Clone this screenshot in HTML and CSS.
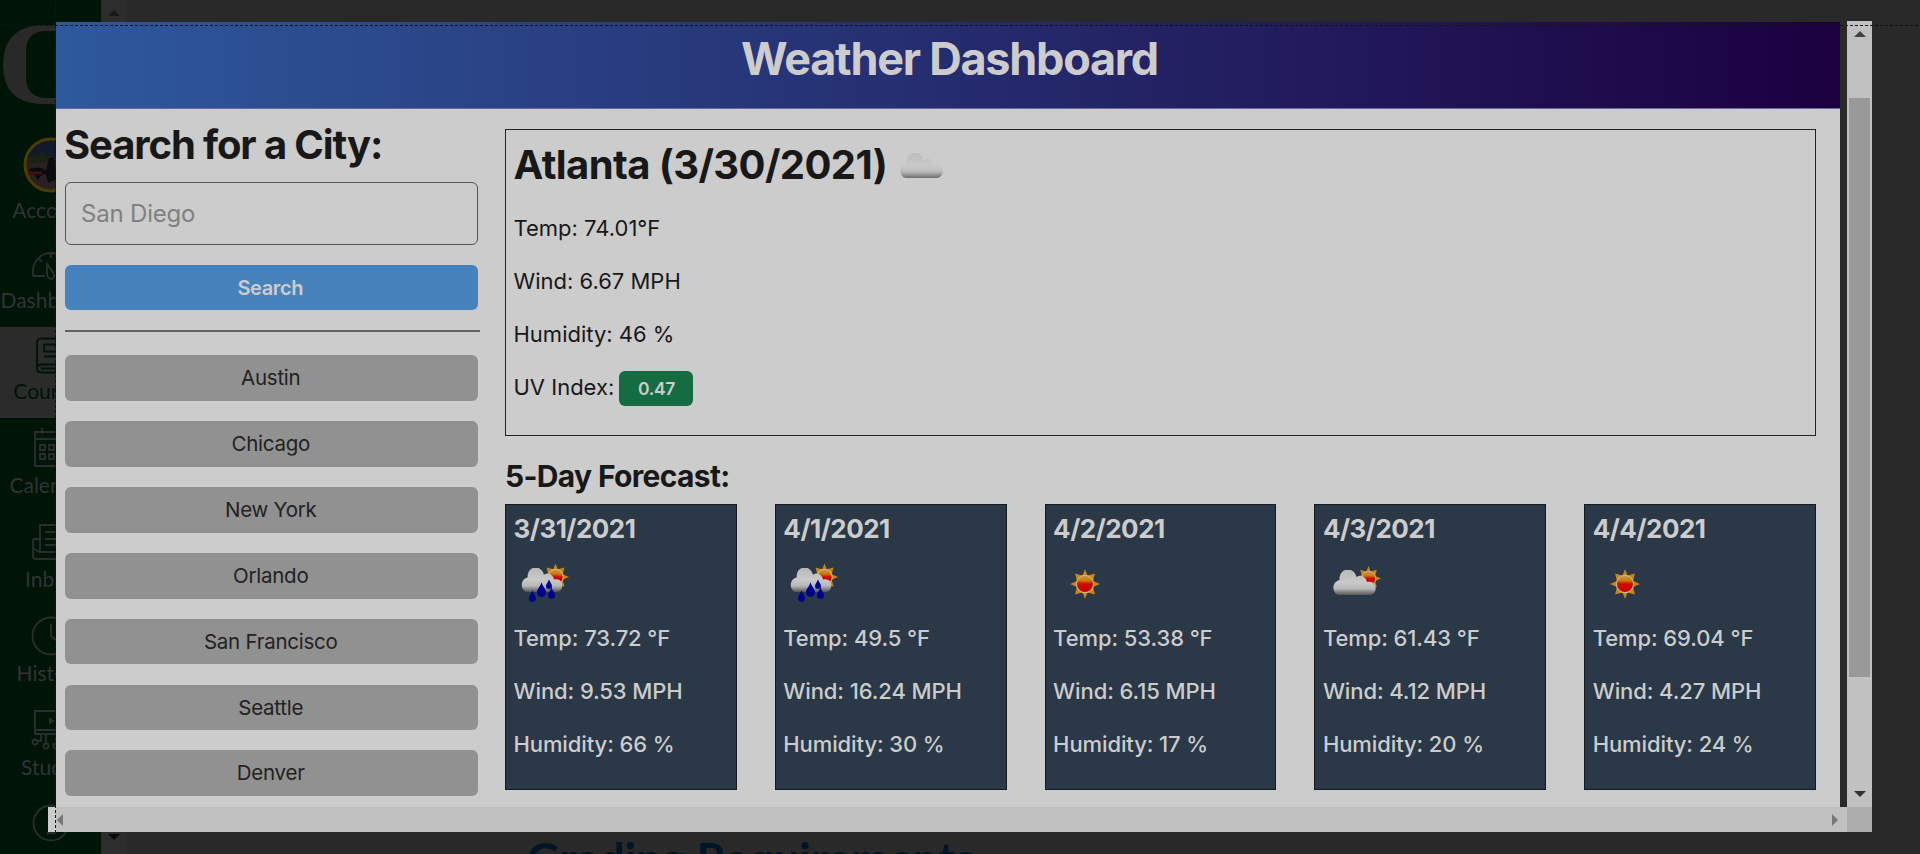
FILE: index.html
```html
<!DOCTYPE html>
<html lang="en">
<head>
<meta charset="utf-8">
<title>Weather Dashboard</title>
<link rel="stylesheet" href="styles.css">
</head>
<body>
<svg width="0" height="0" class="defs">
  <defs>
    <linearGradient id="cloudFill" x1="0" y1="0" x2="0" y2="1"><stop offset="0" stop-color="#b8b8b8"/><stop offset=".5" stop-color="#c9c9c9"/><stop offset=".75" stop-color="#b8b8b8"/><stop offset="1" stop-color="#555"/></linearGradient>
    <linearGradient id="sunFill" x1="0" y1="0" x2="0" y2="1"><stop offset="0" stop-color="#cc9a50"/><stop offset=".3" stop-color="#cc7a00"/><stop offset=".5" stop-color="#cc0c00"/><stop offset="1" stop-color="#cc0000"/></linearGradient>
    <symbol id="sun" viewBox="-15 -15 30 30"><path fill="#cc850c" d="M0-15 2.500-8.500 10-10.500 8-3 15 0 8 3 10 10.500 2.500 8.500 0 15-2.500 8.500-10 10.500-8 3-15 0-8-3-10-10.500-2.500-8.500Z"/><circle r="8.600" fill="url(#sunFill)" stroke="#ccb090" stroke-width="1.200"/></symbol>
    <symbol id="cloud" viewBox="0 0 43 25"><path fill="url(#cloudFill)" d="M6 25C-1 24-2 12 6.500 10 6-3 21-4 23.500 7 28 4 33 7 34 12 45 10 45 24 37 25Z"/></symbol>
    <symbol id="drop" viewBox="0 0 8 13"><path fill="#000090" d="M4 0C5 4 8 6 8 9A4 4 0 0 1 0 9C0 6 3 4 4 0Z"/></symbol>
  </defs>
</svg>
<div class="app">
  <nav class="rail">
    <svg class="logo" viewBox="0 0 101 104"><path fill-rule="evenodd" d="M40 25H61Q98 28 98 65T61 104H40Q3 102 3 65T40 25ZM45 31Q26 32 26 51V80Q28 97 45 98H56Q75 97 75 80V51Q75 32 56 31Z"/></svg>
    <div class="item account">
      <svg class="avatar" viewBox="0 0 54 54"><circle cx="27" cy="27" r="26" fill="#292020" stroke="#4b3e00" stroke-width="3"/><path d="M3 21A25 25 0 0 1 51 21Z" fill="#101a2b"/><path d="M4 20l6-4 5 2 4-6 3 7 5-2v8H3z" fill="#1b2113"/><path d="M5 31q11-4 17 2l3-13 5 0 3 21-9 4-2-9q-6 0-8 7-2-8-9-8z" fill="#090b11"/><path d="M4 35h14" stroke="#43100f" stroke-width="3"/></svg>
      <span>Account</span>
    </div>
    <div class="item dash">
      <svg viewBox="0 -4 40 40"><path d="M2 29V24A18 18 0 0 1 38 24V29H24M2 29H14M20 7v4M8 12l3 3M32 12l-3 3M16 17l7 10q1 4-3 5-4-1-4-5Z"/></svg>
      <span>Dashboard</span>
    </div>
    <div class="item active courses">
      <svg viewBox="0 -1.5 40 40"><path d="M6 32V7q0-4 4-4H34V29H11q-5 0-5 4 0 4 5 4H34M34 29v8M10 33H31M13 9H28V16H13ZM13 21H28"/></svg>
      <span>Courses</span>
    </div>
    <div class="item calendar">
      <svg viewBox="0 0 40 40"><path d="M4 4H36V38H4ZM4 11H36M11 0V6M29 0V6M9 17h5v5H9zM18 17h5v5h-5zM27 17h5v5h-5zM9 26h5v5H9zM18 26h5v5h-5zM27 26h5v5h-5z"/></svg>
      <span>Calendar</span>
    </div>
    <div class="item inbox">
      <svg viewBox="0 0 40 40"><path d="M9 30V3H32V30ZM14 10H27M14 17H27M14 23H27M9 17H4q-2 0-2 2V34q0 3 3 3H35q3 0 3-3V19q0-2-2-2H32M2 26l6 4"/></svg>
      <span>Inbox</span>
    </div>
    <div class="item history">
      <svg viewBox="0 0 40 40"><circle cx="20" cy="20" r="18.500"/><path d="M20 8V20L28 27"/></svg>
      <span>History</span>
    </div>
    <div class="item studio">
      <svg viewBox="0 0 40 40"><path d="M4 1H36V24H4ZM4 20H36M19 9l3 2-3 2ZM10 25v6H5M15 25v8M25 25v8M30 25v6h5"/><circle cx="4" cy="32" r="2.500"/><circle cx="15" cy="36" r="2.500"/><circle cx="25" cy="36" r="2.500"/><circle cx="36" cy="32" r="2.500"/></svg>
      <span>Studio</span>
    </div>
    <div class="item help">
      <svg viewBox="0 0 40 40"><circle cx="20" cy="20" r="17.500"/><path d="M17 10h4M17 18h4v12M16 30h9"/></svg>
    </div>
  </nav>
  <div class="page-scroll"><i class="tri up"></i><i class="tri down"></i></div>
  <main class="page"><h2>Grading Requirements</h2></main>
</div>

<section class="viewer">
  <div class="view-row">
    <div class="dashboard">
      <header><h1>Weather Dashboard</h1></header>
      <div class="body">
        <aside>
          <h2 class="search-title">Search for a City:</h2>
          <div class="field">San Diego</div>
          <div class="btn primary">Search</div>
          <hr>
          <div class="cities">
            <div class="btn">Austin</div><div class="btn">Chicago</div><div class="btn">New York</div><div class="btn">Orlando</div><div class="btn">San Francisco</div><div class="btn">Seattle</div><div class="btn">Denver</div>
          </div>
        </aside>
        <div class="weather">
          <div class="today">
            <h2><span class="place">Atlanta (3/30/2021)</span><svg class="cloud-now" viewBox="0 0 43 25"><use href="#cloud"/></svg></h2>
            <p>Temp: 74.01°F</p><p>Wind: 6.67 MPH</p><p>Humidity: 46 %</p><p>UV Index: <b class="uv">0.47</b></p>
          </div>
          <h3>5-Day Forecast:</h3>
          <div class="days">
            <div class="day"><h4>3/31/2021</h4>
              <svg class="wx" viewBox="0 0 62 60"><use href="#sun" x="28" y="8" width="27" height="28"/><use href="#cloud" x="7" y="13" width="42" height="24"/><use href="#drop" x="23" y="27" width="9" height="15"/><use href="#drop" x="32" y="24" width="6" height="10"/><use href="#drop" x="15" y="35" width="7" height="12"/><use href="#drop" x="34" y="32" width="7" height="12"/></svg>
              <p>Temp: 73.72 °F</p><p>Wind: 9.53 MPH</p><p>Humidity: 66 %</p></div>
            <div class="day"><h4>4/1/2021</h4>
              <svg class="wx" viewBox="0 0 62 60"><use href="#sun" x="28" y="8" width="27" height="28"/><use href="#cloud" x="7" y="13" width="42" height="24"/><use href="#drop" x="23" y="27" width="9" height="15"/><use href="#drop" x="32" y="24" width="6" height="10"/><use href="#drop" x="15" y="35" width="7" height="12"/><use href="#drop" x="34" y="32" width="7" height="12"/></svg>
              <p>Temp: 49.5 °F</p><p>Wind: 16.24 MPH</p><p>Humidity: 30 %</p></div>
            <div class="day"><h4>4/2/2021</h4>
              <svg class="wx" viewBox="0 0 62 60"><use href="#sun" x="17" y="14" width="30" height="30"/></svg>
              <p>Temp: 53.38 °F</p><p>Wind: 6.15 MPH</p><p>Humidity: 17 %</p></div>
            <div class="day"><h4>4/3/2021</h4>
              <svg class="wx" viewBox="0 0 62 60"><use href="#sun" x="33" y="11" width="25" height="25"/><use href="#cloud" x="10" y="15" width="43" height="25"/></svg>
              <p>Temp: 61.43 °F</p><p>Wind: 4.12 MPH</p><p>Humidity: 20 %</p></div>
            <div class="day"><h4>4/4/2021</h4>
              <svg class="wx" viewBox="0 0 62 60"><use href="#sun" x="17" y="14" width="30" height="30"/></svg>
              <p>Temp: 69.04 °F</p><p>Wind: 4.27 MPH</p><p>Humidity: 24 %</p></div>
          </div>
        </div>
      </div>
    </div>
    <div class="vbar"><i class="tri up"></i><div class="thumb"></div><i class="tri down"></i></div>
  </div>
  <div class="hbar"><div class="track"><i class="tri left"></i><i class="tri right"></i></div><div class="corner"></div></div>
</section>
<div class="guide-h"></div>
<div class="guide-v"></div>
</body>
</html>
```

FILE: styles.css
```css
* { box-sizing: border-box; }
body { margin: 0; width: 1920px; height: 854px; overflow: hidden; position: relative; background: #292929; font-family: Inter, "Liberation Sans", sans-serif; color: #181818; }
h1, h2, h3, h4, p { margin: 0; font-weight: 700; }
.defs { position: absolute; }
.app { display: flex; height: 854px; }

/* Course navigation rail */
.rail { width: 101px; background: #001407; color: #313335; font-family: Lato, sans-serif; font-size: 21px; line-height: 26px; overflow: hidden; flex: none; }
.logo { display: block; width: 101px; height: 104px; fill: #292929; }
.item { height: 94px; display: flex; flex-direction: column; align-items: center; justify-content: flex-end; padding-bottom: 14px; white-space: nowrap; }
.item svg { width: 40px; height: 40px; flex: none; fill: none; stroke: #2b2e2e; stroke-width: 1.8; margin-bottom: 4px; overflow: visible; }
.item .avatar { width: 54px; height: 54px; stroke: none; margin-bottom: 5px; }
.account { height: 133px; }
.dash { height: 90px; }
.item.active { height: 91px; background: #2b2b2b; color: #001407; }
.item.active svg { stroke: #001407; }
.help { height: 56px; padding: 0; justify-content: center; }
.item.help svg { margin: 2px 0 0; }

.page-scroll { width: 25px; background: #2d2d2d; display: flex; flex-direction: column; justify-content: space-between; align-items: center; padding: 10px 0 16px; }
.page { flex: 1; display: flex; align-items: flex-end; overflow: hidden; }
.page h2 { font: 700 45px/54px Lato, sans-serif; color: #001525; height: 22px; margin-left: 401px; letter-spacing: .1px; white-space: nowrap; }

.tri { width: 0; height: 0; border: 6px solid transparent; }
.up { border-top: 0; border-bottom-color: #414141; }
.down { border-bottom: 0; border-top-color: #303030; }
.left { border-left: 0; border-right-color: #777; }
.right { border-right: 0; border-left-color: #777; }
.page-scroll .up { border-bottom-color: #191919; }
.page-scroll .down { border-top-color: #090909; margin-bottom: -2px; }

/* Preview overlay */
.viewer { position: absolute; left: 48px; top: 21px; width: 1824px; height: 811px; }
.view-row { display: flex; justify-content: space-between; height: 786px; padding-left: 8px; }
.dashboard { width: 1784px; margin-top: 1px; height: 785px; background: #ccc; overflow: hidden; }
.vbar { width: 25px; height: 786px; background: #c1c1c1; display: flex; flex-direction: column; align-items: center; padding: 10px 0 10px; }
.vbar .thumb { width: 21px; height: 579px; margin-top: 61px; background: #999; }
.vbar .down { margin-top: auto; }
.hbar { display: flex; height: 25px; }
.track { width: 1799px; background: #c0c0c0; display: flex; justify-content: space-between; align-items: center; padding: 0 9px; border-left: 8px solid #ccc; }
.track .left { margin-left: -8px; }
.corner { width: 25px; background: #adadad; }

header { height: 87px; background: linear-gradient(90deg, #2e599d, #1c0040); border-bottom: 1px solid #6868a0; text-align: center; color: #ccc; }
h1 { font-size: 45px; line-height: 74px; letter-spacing: -1.25px; padding-left: 3px; }
.body { display: flex; padding: 0 24px 0 9px; }
aside { width: 415px; margin-right: 25px; flex: none; }
.search-title { font-size: 40px; line-height: 48px; margin-top: 12px; letter-spacing: -1.12px; margin-left: -1px; white-space: nowrap; }
.field { margin-top: 13px; width: 412.5px; height: 63px; border: 1px solid #555; border-radius: 6px; padding-left: 15px; font-size: 24px; letter-spacing: -.2px; line-height: 61px; color: #808080; }
.btn { width: 412.5px; height: 45.7px; border-radius: 6px; background: #919191; font-size: 20.5px; letter-spacing: -.25px; line-height: 46px; text-align: center; color: #222; padding-right: 1px; }
.primary { margin-top: 19.5px; background: #4682bb; color: #ccc; font-size: 20px; font-weight: 600; letter-spacing: -.4px; padding-right: 2px; }
hr { border: 0; height: 2px; background: #626262; margin: 20px 0 23px; }
.cities { display: flex; flex-direction: column; gap: 20.2px; }

.weather { flex: 1; }
.today { margin-top: 20px; height: 307px; border: 1px solid #222; padding: 7px 7.500px 0; }
.today h2 { font-size: 40px; line-height: 56px; letter-spacing: -.6px; display: flex; align-items: center; }
.cloud-now { width: 43px; height: 25px; margin-left: 13px; opacity: .8; }
.today p { font-size: 22px; font-weight: 400; height: 53.3px; line-height: 28px; white-space: nowrap; }
.today h2 + p { margin-top: 20.5px; }
.uv { display: inline-block; width: 74px; height: 35px; margin: -7px 0 -5px -1px; border-radius: 6px; background: #146c43; color: #ccc; font-size: 17.500px; font-weight: 600; letter-spacing: -.4px; line-height: 35px; text-align: center; vertical-align: middle; }
h3 { font-size: 30px; line-height: 36px; margin-top: 22px; letter-spacing: -.67px; }
.days { display: flex; gap: 38px; margin-top: 10px; }
.day { flex: 1; height: 286px; background: #2a3847; border: 1px solid #151a1f; color: #ccc; padding: 8px 7.500px; }
h4 { font-size: 26px; line-height: 32px; letter-spacing: -.5px; }
.wx { display: block; width: 62px; height: 60px; margin-top: 10px; }
.day p { font-size: 22px; line-height: 28px; font-weight: 500; height: 53.3px; letter-spacing: -.1px; white-space: nowrap; }
.wx + p { margin-top: 8.5px; }

.guide-h { position: absolute; left: 0; top: 25px; width: 1920px; height: 1px; background: repeating-linear-gradient(90deg, #141414 0 3px, transparent 3px 5px); }
.guide-v { position: absolute; left: 55px; top: 0; width: 1px; height: 854px; background: repeating-linear-gradient(#141414 0 3px, transparent 3px 5px); }
```
